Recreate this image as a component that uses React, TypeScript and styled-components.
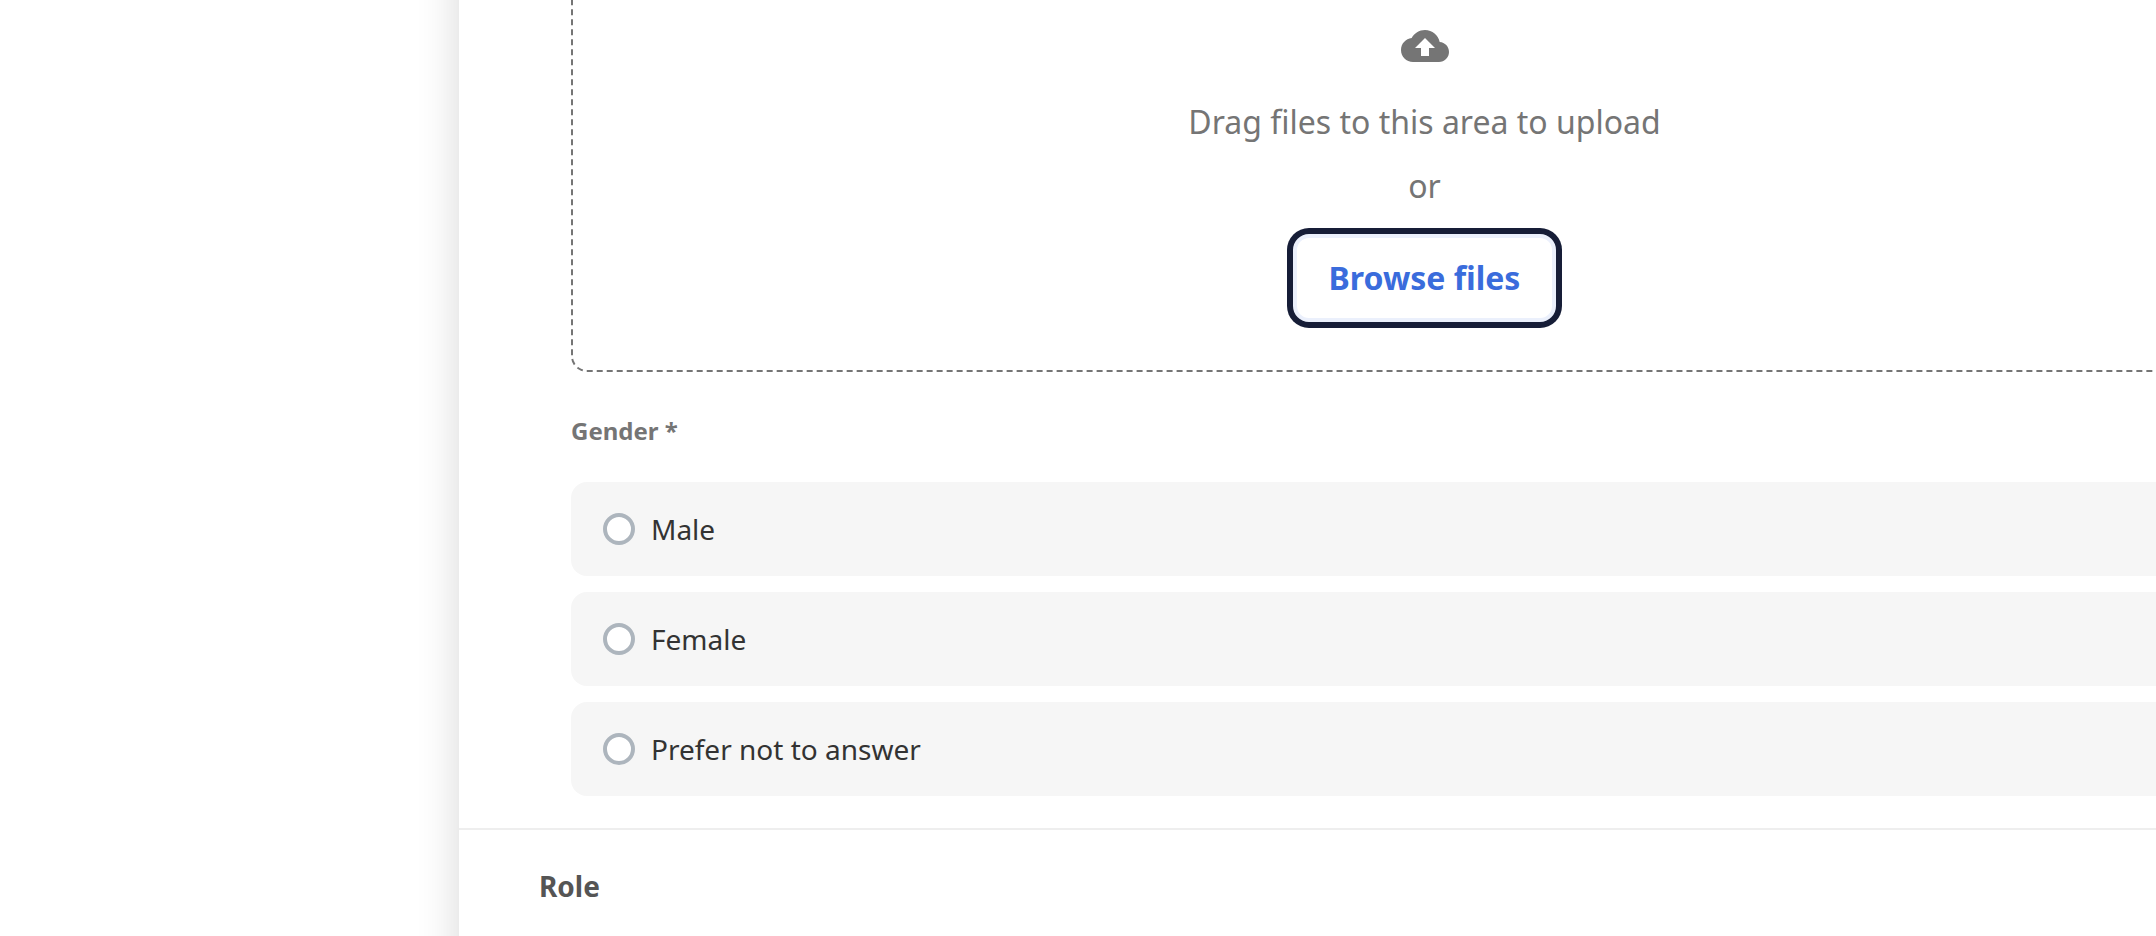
import React, { useState } from "react";
import styled, { createGlobalStyle } from "styled-components";

const GlobalStyle = createGlobalStyle`
  *, *::before, *::after { box-sizing: border-box; }
  body {
    margin: 0;
    background: #ffffff;
    color: #333333;
    font-family: "Noto Sans", "Open Sans", sans-serif;
  }
`;

/* The form is wider than the window and scrolled part of the way down. */
const Viewport = styled.main`
  display: flex;
  min-height: 100vh;
  overflow: hidden;
`;

const Panel = styled.form`
  flex: 1;
  margin: -100px -234px -100px 459px;
  padding: 72px 0 100px;
  background: #ffffff;
  box-shadow: 0 0 40px rgba(0, 0, 0, 0.16);
`;

const Section = styled.section`
  padding: 0 112px 32px;
`;

const DropZone = styled.div`
  display: flex;
  flex-direction: column;
  align-items: center;
  padding: 48px;
  border: 2px dashed #757575;
  border-radius: 16px;
`;

const CloudIcon = styled.svg`
  width: 48px;
  height: 48px;
  margin-bottom: 28px;
  fill: #757575;
`;

const DropText = styled.p`
  margin: 0 0 16px;
  color: #757575;
  font-size: 32px;
  line-height: 48px;
`;

const BrowseButton = styled.button`
  height: 88px;
  margin-top: 8px;
  padding: 0 32px;
  border: 4px solid #ebf0fc;
  border-radius: 16px;
  background: #ffffff;
  box-shadow: 0 0 0 6px #161d37;
  color: #3a6cdc;
  font: 700 32px/48px "Noto Sans", "Open Sans", sans-serif;
  cursor: pointer;
`;

const FieldSet = styled.fieldset`
  display: flex;
  flex-direction: column;
  gap: 16px;
  min-width: 0;
  margin: 40px 0 0;
  padding: 0;
  border: 0;
`;

const Legend = styled.legend`
  margin-bottom: 32px;
  padding: 0;
  color: #757575;
  font-size: 24px;
  font-weight: 700;
  line-height: 38px;
`;

const Option = styled.label`
  display: flex;
  align-items: center;
  gap: 16px;
  height: 94px;
  padding: 0 32px;
  border-radius: 16px;
  background: #f6f6f6;
  font-size: 28px;
  line-height: 40px;
  cursor: pointer;
`;

const Radio = styled.input`
  appearance: none;
  width: 32px;
  height: 32px;
  margin: 0;
  border: 4px solid #adb5bd;
  border-radius: 50%;
  background: #ffffff;

  &:checked {
    border: 10px solid #3a6cdc;
  }
`;

const SectionHeader = styled.header`
  padding: 36px 80px;
  border-top: 2px solid #eeeeee;
`;

const SectionTitle = styled.h2`
  margin: 0;
  color: #555555;
  font-size: 28px;
  font-weight: 700;
  line-height: 40px;
`;

const genders = ["Male", "Female", "Prefer not to answer"];

export default function App() {
  const [gender, setGender] = useState("");

  return (
    <>
      <GlobalStyle />
      <Viewport>
        <Panel>
          <Section>
            <DropZone>
              <CloudIcon viewBox="0 0 24 24" aria-hidden="true">
                <path d="M19.35 10.04C18.67 6.59 15.64 4 12 4 9.11 4 6.6 5.64 5.35 8.04 2.34 8.36 0 10.91 0 14c0 3.31 2.69 6 6 6h13c2.76 0 5-2.24 5-5 0-2.64-2.05-4.78-4.65-4.96zM14 13v4h-4v-4H7l5-5 5 5h-3z" />
              </CloudIcon>
              <DropText>Drag files to this area to upload</DropText>
              <DropText>or</DropText>
              <BrowseButton type="button">Browse files</BrowseButton>
            </DropZone>
            <FieldSet>
              <Legend>Gender *</Legend>
              {genders.map((name) => (
                <Option key={name}>
                  <Radio
                    type="radio"
                    name="gender"
                    value={name}
                    checked={gender === name}
                    onChange={() => setGender(name)}
                  />
                  {name}
                </Option>
              ))}
            </FieldSet>
          </Section>
          <SectionHeader>
            <SectionTitle>Role</SectionTitle>
          </SectionHeader>
        </Panel>
      </Viewport>
    </>
  );
}
